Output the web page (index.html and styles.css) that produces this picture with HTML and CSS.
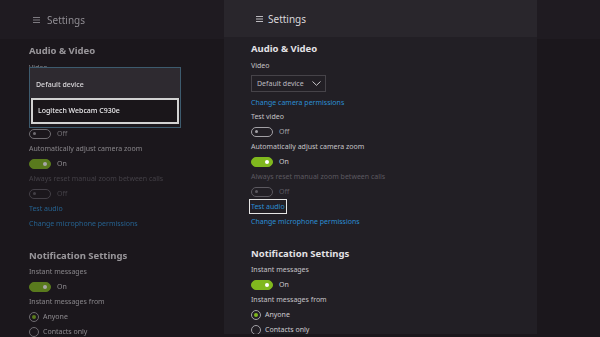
FILE: index.html
```html
<!DOCTYPE html>
<html lang="en">
<head>
<meta charset="utf-8">
<title>Settings</title>
<link rel="stylesheet" href="styles.css">
</head>
<body>
<div class="screen">
  <div class="backdrop">
    <header class="bar bar--back">
      <svg class="burger" width="7" height="6" viewBox="0 0 7 6"><rect y="0" width="7" height="1" fill="currentColor"/><rect y="2.5" width="7" height="1" fill="currentColor"/><rect y="5" width="7" height="1" fill="currentColor"/></svg>
      <span class="title">Settings</span>
    </header>
    <div class="content content--back">
      <h2 class="heading">Audio &amp; Video</h2>
      <div class="row label">Video</div>
      <div class="select covered"></div>
      <div class="row covered"></div>
      <div class="row row--tight covered"></div>
      <div class="row toggle-row"><span class="toggle"></span><span class="state">Off</span></div>
      <div class="row label">Automatically adjust camera zoom</div>
      <div class="row toggle-row"><span class="toggle toggle--on"></span><span class="state state--on">On</span></div>
      <div class="row label label--disabled">Always reset manual zoom between calls</div>
      <div class="row toggle-row"><span class="toggle toggle--disabled"></span><span class="state state--disabled">Off</span></div>
      <div class="row link">Test audio</div>
      <div class="row link">Change microphone permissions</div>
      <h2 class="heading heading--section">Notification Settings</h2>
      <div class="row label">Instant messages</div>
      <div class="row toggle-row"><span class="toggle toggle--on"></span><span class="state state--on">On</span></div>
      <div class="row label">Instant messages from</div>
      <div class="row radio-row"><span class="radio radio--on"></span><span class="state state--on">Anyone</span></div>
      <div class="row radio-row"><span class="radio"></span><span class="state state--on">Contacts only</span></div>
    </div>
    <div class="menu">
      <div class="menu-item">Default device</div>
      <div class="menu-item menu-item--focus">Logitech Webcam C930e</div>
    </div>
  </div>

  <aside class="panel">
    <header class="bar">
      <svg class="burger" width="7" height="6" viewBox="0 0 7 6"><rect y="0" width="7" height="1" fill="currentColor"/><rect y="2.5" width="7" height="1" fill="currentColor"/><rect y="5" width="7" height="1" fill="currentColor"/></svg>
      <span class="title">Settings</span>
    </header>
    <div class="content">
      <h2 class="heading">Audio &amp; Video</h2>
      <div class="row label">Video</div>
      <div class="select"><span>Default device</span><svg class="chev" width="9" height="5" viewBox="0 0 9 5"><polyline points="0.5,0.5 4.5,4.3 8.5,0.5" fill="none" stroke="currentColor" stroke-width="1"/></svg></div>
      <div class="row link">Change camera permissions</div>
      <div class="row row--tight label">Test video</div>
      <div class="row toggle-row"><span class="toggle"></span><span class="state">Off</span></div>
      <div class="row label">Automatically adjust camera zoom</div>
      <div class="row toggle-row"><span class="toggle toggle--on"></span><span class="state state--on">On</span></div>
      <div class="row label label--disabled">Always reset manual zoom between calls</div>
      <div class="row toggle-row"><span class="toggle toggle--disabled"></span><span class="state state--disabled">Off</span></div>
      <div class="row"><span class="link focus">Test audio</span></div>
      <div class="row link">Change microphone permissions</div>
      <h2 class="heading heading--section">Notification Settings</h2>
      <div class="row label">Instant messages</div>
      <div class="row toggle-row"><span class="toggle toggle--on"></span><span class="state state--on">On</span></div>
      <div class="row label">Instant messages from</div>
      <div class="row radio-row"><span class="radio radio--on"></span><span class="state state--on">Anyone</span></div>
      <div class="row radio-row"><span class="radio"></span><span class="state state--on">Contacts only</span></div>
    </div>
  </aside>
</div>
</body>
</html>
```

FILE: styles.css
```css
* { box-sizing: border-box; }

html, body {
  margin: 0;
  padding: 0;
}

body {
  width: 600px;
  height: 337px;
  overflow: hidden;
  background: #1b171c;
  font-family: "Noto Sans", "Open Sans", sans-serif;
}

.screen {
  position: relative;
  width: 600px;
  height: 337px;
  overflow: hidden;
}

/* ---------- backdrop (dimmed page behind the panel) ---------- */
.backdrop {
  position: relative;
  height: 337px;
}

.bar {
  display: flex;
  align-items: center;
  height: 37px;
  padding-left: 32px;
  gap: 5px;
  background: #29262c;
  color: #d9d7db;
}

.bar--back {
  height: 39px;
  padding-left: 33px;
  gap: 7px;
  background: #1f1b21;
  color: #8f8c92;
  filter: blur(0.5px);
}

.burger {
  display: block;
  color: #bdbbc0;
}

.bar--back .burger { color: #7d7a80; }

.title {
  font-size: 10px;
  line-height: 14px;
}

.content {
  padding: 4px 0 0 27px;
}

.content--back {
  padding-left: 29px;
  opacity: 0.62;
  filter: blur(0.5px);
}

.covered { visibility: hidden; }

.heading {
  margin: 0;
  font-size: 9.5px;
  line-height: 16px;
  font-weight: 700;
  color: #e4e2e6;
}

.heading:first-child { margin-bottom: 1px; }

.heading--section {
  margin-top: 17px;
}

.row {
  height: 15px;
  line-height: 15px;
  font-size: 7px;
  white-space: nowrap;
  display: flex;
  align-items: center;
}

.row--tight { margin-top: -1px; }

.label { color: #c6c4c8; }
.label--disabled { color: #5c5960; }

.link { color: #2b8dd3; }

.select {
  display: flex;
  align-items: center;
  justify-content: space-between;
  width: 75px;
  height: 17px;
  margin-top: 2px;
  margin-bottom: 3px;
  padding: 0 4px 0 5px;
  border: 1px solid #464349;
  font-size: 7px;
  color: #bdbbc0;
}

.chev { display: block; color: #c9c7cb; }

.toggle-row, .radio-row { gap: 6px; }

.toggle {
  position: relative;
  display: block;
  width: 22px;
  height: 10px;
  border: 1px solid #a3a1a6;
  border-radius: 5px;
}

.toggle::after {
  content: "";
  position: absolute;
  left: 3px;
  top: 2.5px;
  width: 3px;
  height: 3px;
  border-radius: 50%;
  background: #a3a1a6;
}

.toggle--on {
  background: #80b81e;
  border-color: #80b81e;
}

.toggle--on::after {
  left: auto;
  right: 3px;
  top: 2px;
  width: 4px;
  height: 4px;
  background: #ffffff;
}

.toggle--disabled { border-color: #5c5960; }
.toggle--disabled::after { background: #5c5960; }

.state { color: #a6a4a9; }
.state--on { color: #cfcdd1; }
.state--disabled { color: #5c5960; }

.radio {
  position: relative;
  display: block;
  width: 10px;
  height: 10px;
  border: 1px solid #a3a1a6;
  border-radius: 50%;
  margin-right: -2px;
}

.radio--on::after {
  content: "";
  position: absolute;
  left: 2px;
  top: 2px;
  width: 4px;
  height: 4px;
  border-radius: 50%;
  background: #80b81e;
}

.focus {
  display: block;
  margin-left: -2px;
  padding: 0 1px;
  height: 15px;
  line-height: 13px;
  border: 1px solid #e6e6e6;
}

/* ---------- dropdown menu overlay in backdrop ---------- */
.menu {
  position: absolute;
  left: 29px;
  top: 67px;
  width: 152px;
  padding: 0 1px 3px;
  border: 1px solid #3d5b6e;
  background: #1c191e;
  filter: blur(0.3px);
}

.menu-item {
  height: 30px;
  padding-top: 4px;
  line-height: 26px;
  padding-left: 6px;
  font-size: 7px;
  font-weight: 500;
  color: #dcdadd;
  background: #2e2a30;
  margin: 0 -1px;
}

.menu-item--focus {
  height: 26px;
  padding-top: 0;
  line-height: 22px;
  margin: 0;
  padding-left: 5px;
  border: 2px solid #d2d2d2;
  background: #1a161a;
  color: #ecebed;
}

/* ---------- foreground panel ---------- */
.panel {
  position: absolute;
  left: 224px;
  top: 0;
  width: 313px;
  height: 334px;
  overflow: hidden;
  background: #221f25;
}
```
